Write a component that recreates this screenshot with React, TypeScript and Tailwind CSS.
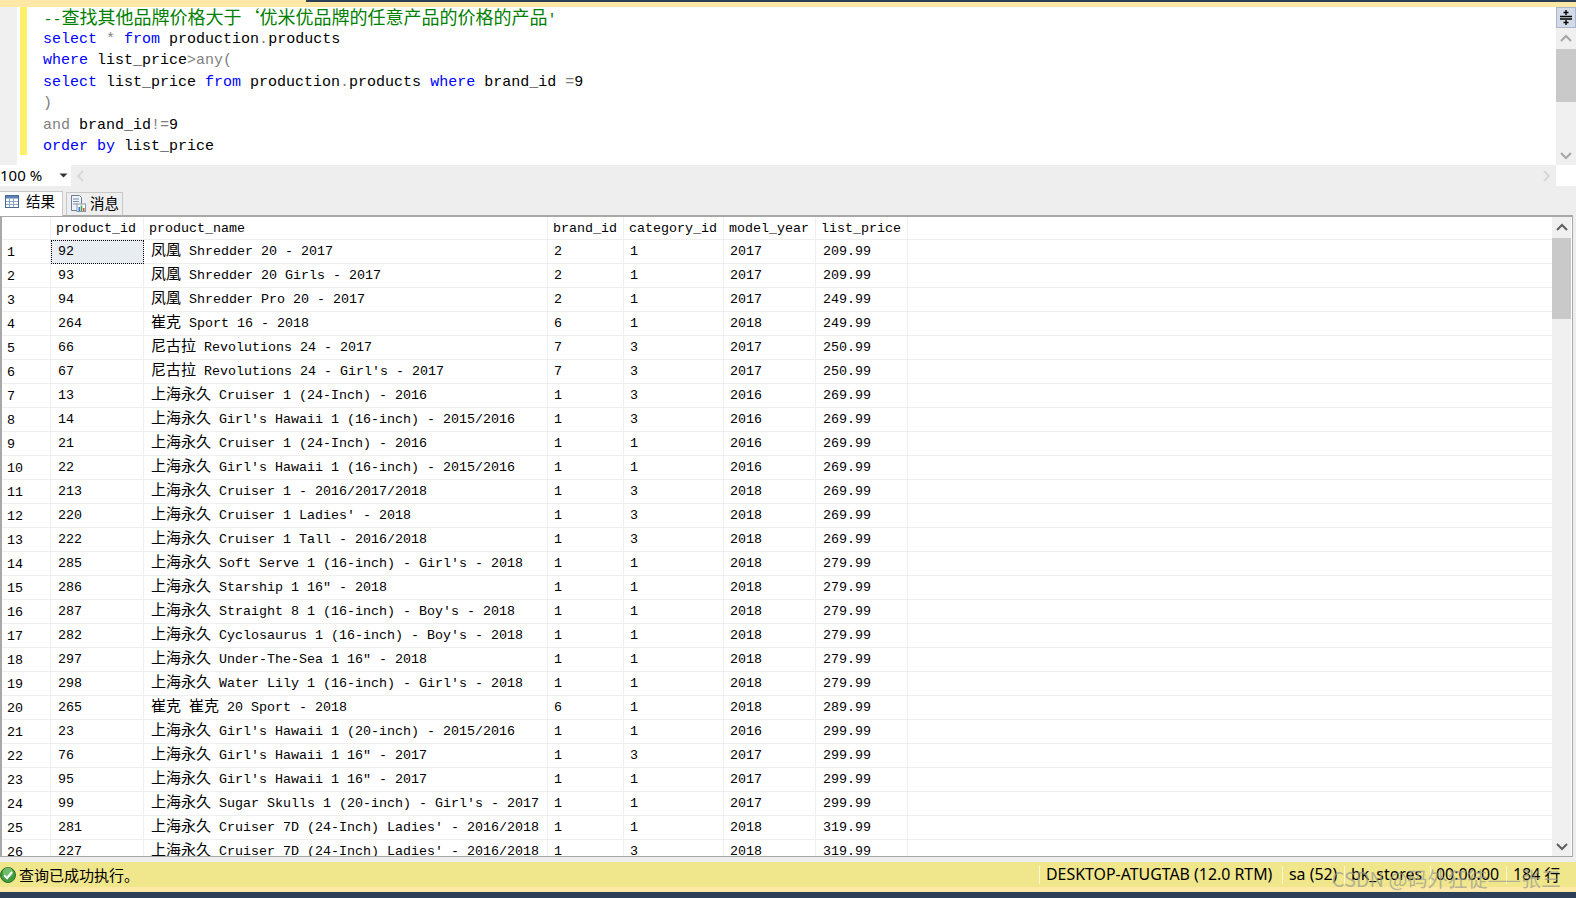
import React from "react";

const rows: [number, number, string, number, number, number, string][] = [
  [1, 92, "凤凰 Shredder 20 - 2017", 2, 1, 2017, "209.99"],
  [2, 93, "凤凰 Shredder 20 Girls - 2017", 2, 1, 2017, "209.99"],
  [3, 94, "凤凰 Shredder Pro 20 - 2017", 2, 1, 2017, "249.99"],
  [4, 264, "崔克 Sport 16 - 2018", 6, 1, 2018, "249.99"],
  [5, 66, "尼古拉 Revolutions 24 - 2017", 7, 3, 2017, "250.99"],
  [6, 67, "尼古拉 Revolutions 24 - Girl's - 2017", 7, 3, 2017, "250.99"],
  [7, 13, "上海永久 Cruiser 1 (24-Inch) - 2016", 1, 3, 2016, "269.99"],
  [8, 14, "上海永久 Girl's Hawaii 1 (16-inch) - 2015/2016", 1, 3, 2016, "269.99"],
  [9, 21, "上海永久 Cruiser 1 (24-Inch) - 2016", 1, 1, 2016, "269.99"],
  [10, 22, "上海永久 Girl's Hawaii 1 (16-inch) - 2015/2016", 1, 1, 2016, "269.99"],
  [11, 213, "上海永久 Cruiser 1 - 2016/2017/2018", 1, 3, 2018, "269.99"],
  [12, 220, "上海永久 Cruiser 1 Ladies' - 2018", 1, 3, 2018, "269.99"],
  [13, 222, "上海永久 Cruiser 1 Tall - 2016/2018", 1, 3, 2018, "269.99"],
  [14, 285, "上海永久 Soft Serve 1 (16-inch) - Girl's - 2018", 1, 1, 2018, "279.99"],
  [15, 286, "上海永久 Starship 1 16″ - 2018", 1, 1, 2018, "279.99"],
  [16, 287, "上海永久 Straight 8 1 (16-inch) - Boy's - 2018", 1, 1, 2018, "279.99"],
  [17, 282, "上海永久 Cyclosaurus 1 (16-inch) - Boy's - 2018", 1, 1, 2018, "279.99"],
  [18, 297, "上海永久 Under-The-Sea 1 16″ - 2018", 1, 1, 2018, "279.99"],
  [19, 298, "上海永久 Water Lily 1 (16-inch) - Girl's - 2018", 1, 1, 2018, "279.99"],
  [20, 265, "崔克 崔克 20 Sport - 2018", 6, 1, 2018, "289.99"],
  [21, 23, "上海永久 Girl's Hawaii 1 (20-inch) - 2015/2016", 1, 1, 2016, "299.99"],
  [22, 76, "上海永久 Girl's Hawaii 1 16″ - 2017", 1, 3, 2017, "299.99"],
  [23, 95, "上海永久 Girl's Hawaii 1 16″ - 2017", 1, 1, 2017, "299.99"],
  [24, 99, "上海永久 Sugar Skulls 1 (20-inch) - Girl's - 2017", 1, 1, 2017, "299.99"],
  [25, 281, "上海永久 Cruiser 7D (24-Inch) Ladies' - 2016/2018", 1, 1, 2018, "319.99"],
  [26, 227, "上海永久 Cruiser 7D (24-Inch) Ladies' - 2016/2018", 1, 3, 2018, "319.99"],
];

const COLS = "grid-cols-[49px_93px_404px_76px_100px_92px_92px]";

function Mixed({ text, big }: { text: string; big?: boolean }) {
  const parts = text.split(/([\u4e00-\u9fff‘]+)/);
  return (
    <>
      {parts.map((p, i) =>
        /[\u4e00-\u9fff‘]/.test(p) ? (
          <span
            key={i}
            className={
              big
                ? "font-['Noto_Sans_CJK_SC',sans-serif] text-[18px] leading-none"
                : "font-['Noto_Sans_CJK_SC',sans-serif] text-[15px] leading-none"
            }
          >
            {p}
          </span>
        ) : (
          <span key={i}>{p}</span>
        )
      )}
    </>
  );
}

function Line({ children }: { children: React.ReactNode }) {
  return <div className="h-[21.5px] leading-[21.5px] whitespace-pre">{children}</div>;
}

function Chevron({ dir, color }: { dir: "up" | "down" | "left" | "right"; color: string }) {
  const d = {
    up: "M2 9 L7 4 L12 9",
    down: "M2 5 L7 10 L12 5",
    left: "M9 2 L4 7 L9 12",
    right: "M5 2 L10 7 L5 12",
  }[dir];
  return (
    <svg width="14" height="14" viewBox="0 0 14 14">
      <path d={d} fill="none" stroke={color} strokeWidth="2" />
    </svg>
  );
}

function GridIcon() {
  return (
    <svg width="14" height="13" viewBox="0 0 14 13" className="shrink-0">
      <rect x="0.5" y="0.5" width="13" height="12" fill="#fff" stroke="#4a6a96" />
      <rect x="1" y="1" width="12" height="2.5" fill="#5b80b4" />
      <path d="M1 6.5H13M1 9.5H13M4.5 3.5V12M8.5 3.5V12" stroke="#8ea6c6" strokeWidth="1" />
    </svg>
  );
}

function MessageIcon() {
  return (
    <svg width="15" height="18" viewBox="0 0 15 18" className="shrink-0">
      <path d="M0.5 1.5H8.5L10.5 3.5V16.5H0.5Z" fill="#eef2f7" stroke="#6c7f99" />
      <path d="M2 5H8M2 7.5H8M2 10H6" stroke="#7b90ad" />
      <rect x="6" y="10" width="8.5" height="7.5" fill="#fff" stroke="#8a96a8" />
      <rect x="7.5" y="13" width="1.6" height="4" fill="#2f7fd6" />
      <rect x="9.7" y="11.5" width="1.6" height="5.5" fill="#3aa655" />
      <rect x="11.9" y="14" width="1.6" height="3" fill="#d8503c" />
    </svg>
  );
}

function CheckIcon() {
  return (
    <svg width="16" height="16" viewBox="0 0 16 16" className="shrink-0">
      <circle cx="8" cy="8" r="7.5" fill="#3f9d3c" stroke="#2c6f2c" />
      <circle cx="8" cy="5.5" r="5" fill="#8fd08a" opacity="0.6" />
      <path d="M4 8.3 L7 11.2 L12 5" fill="none" stroke="#fff" strokeWidth="2" />
    </svg>
  );
}

export default function App() {
  const mono = "font-['Liberation_Mono',monospace]";
  return (
    <div className={`relative w-[1576px] h-[898px] overflow-hidden bg-[#eeeeee] flex flex-col text-black ${mono}`}>
      {/* top strip */}
      <div className="h-[7px] shrink-0 bg-[#ffe8a6] flex items-start">
        <div className="w-[306px]" />
        <div className="flex-1 h-[2px] bg-[#2d3e57]" />
      </div>

      {/* editor */}
      <div className="h-[158px] shrink-0 flex bg-white">
        <div className="w-[17px] bg-[#f0f0f0] shrink-0" />
        <div className="w-[3px] shrink-0" />
        <div className="w-[7px] h-[148px] bg-[#fff06a] shrink-0" />
        <div className="flex-1 pl-[16px] text-[15px]">
          <Line>
            <span className="text-[#008000] ml-[0.5px]">
              <Mixed big text="--查找其他品牌价格大于‘优米优品牌的任意产品的价格的产品'" />
            </span>
          </Line>
          <div>
            <Line>
              <span className="text-[#0000ff]">select</span> <span className="text-[#808080]">*</span>{" "}
              <span className="text-[#0000ff]">from</span> production<span className="text-[#808080]">.</span>products
            </Line>
            <Line>
              <span className="text-[#0000ff]">where</span> list_price<span className="text-[#808080]">&gt;any(</span>
            </Line>
            <Line>
              <span className="text-[#0000ff]">select</span> list_price <span className="text-[#0000ff]">from</span>{" "}
              production<span className="text-[#808080]">.</span>products <span className="text-[#0000ff]">where</span>{" "}
              brand_id <span className="text-[#808080]">=</span>9
            </Line>
            <Line>
              <span className="text-[#808080]">)</span>
            </Line>
            <Line>
              <span className="text-[#808080]">and</span> brand_id<span className="text-[#808080]">!=</span>9
            </Line>
            <Line>
              <span className="text-[#0000ff]">order by</span> list_price
            </Line>
          </div>
        </div>
        <div className="w-[20px] shrink-0 flex flex-col bg-[#f0f0f0]">
          <div className="h-[21px] shrink-0 bg-[#d3dbe8] border border-[#a9b6cc] flex items-center justify-center">
            <svg width="14" height="17" viewBox="0 0 14 17">
              <path d="M1 7.5H13M1 10H13" stroke="#000" strokeWidth="1.4" />
              <path d="M7 1V6M7 11V16" stroke="#000" strokeWidth="1.4" />
              <path d="M4.5 3.5H9.5M4.5 13.5H9.5" stroke="#000" strokeWidth="1.4" />
            </svg>
          </div>
          <div className="h-[21px] shrink-0 flex items-center justify-center">
            <Chevron dir="up" color="#a6a6a6" />
          </div>
          <div className="h-[53px] shrink-0 bg-[#c9c9c9]" />
          <div className="flex-1" />
          <div className="h-[20px] shrink-0 flex items-center justify-center">
            <Chevron dir="down" color="#a6a6a6" />
          </div>
        </div>
      </div>

      {/* zoom and horizontal scrollbar */}
      <div className="h-[21px] shrink-0 flex bg-[#eeeeee]">
        <div className="w-[71px] shrink-0 bg-white flex items-center justify-between pr-[3px] font-['Noto_Sans',sans-serif] text-[15px]">
          <span className="text-black">100 %</span>
          <svg width="9" height="5" viewBox="0 0 9 5">
            <path d="M0.5 0.5H8.5L4.5 4.5Z" fill="#333" />
          </svg>
        </div>
        <div className="w-[20px] shrink-0 flex items-center justify-center">
          <Chevron dir="left" color="#d8d8d8" />
        </div>
        <div className="flex-1" />
        <div className="w-[20px] shrink-0 flex items-center justify-center">
          <Chevron dir="right" color="#d8d8d8" />
        </div>
        <div className="w-[20px] shrink-0 bg-white" />
      </div>

      {/* tabs */}
      <div className="h-[29px] shrink-0 flex items-end gap-[3px] font-['Noto_Sans_CJK_SC',sans-serif] text-[14.5px]">
        <div className="h-[25px] w-[63px] bg-white border-t border-r border-[#c8c8c8] flex items-center pl-[5px] gap-[7px] leading-none relative top-px pb-[5px]">
          <GridIcon />
          <span>结果</span>
        </div>
        <div className="h-[23px] w-[57px] bg-[#eeeeee] border-t border-r border-l border-[#c8c8c8] flex items-center pl-[4px] gap-[4px] leading-none pb-[2px]">
          <MessageIcon />
          <span>消息</span>
        </div>
      </div>

      {/* results grid */}
      <div className="h-[642px] shrink-0 mr-[3px] border border-[#a8a8a8] border-t-2 border-l-2 bg-white flex">
        <div className="w-[1550px] overflow-hidden text-[13.33px]">
          <div className={`grid ${COLS} h-[23px] leading-[24px] border-b border-[#efefef]`}>
            <div className="border-r border-[#efefef]" />
            {["product_id", "product_name", "brand_id", "category_id", "model_year", "list_price"].map((h) => (
              <div key={h} className="pl-[5px] border-r border-[#efefef]">
                {h}
              </div>
            ))}
          </div>
          {rows.map((r, i) => (
            <div key={r[0]} className={`grid ${COLS} h-[24px] leading-[23px] border-b border-[#efefef]`}>
              <div className="pl-[5px] border-r border-[#efefef] pt-px">{r[0]}</div>
              <div
                className={
                  i === 0
                    ? "pl-[6px] bg-[#e8edf1] border border-dotted border-black leading-[21px]"
                    : "pl-[7px] border-r border-[#efefef]"
                }
              >
                {r[1]}
              </div>
              <div className="pl-[7px] border-r border-[#efefef] whitespace-pre">
                <Mixed text={r[2]} />
              </div>
              <div className="pl-[6px] border-r border-[#efefef]">{r[3]}</div>
              <div className="pl-[6px] border-r border-[#efefef]">{r[4]}</div>
              <div className="pl-[6px] border-r border-[#efefef]">{r[5]}</div>
              <div className="pl-[7px] border-r border-[#efefef]">{r[6]}</div>
            </div>
          ))}
        </div>
        <div className="w-[19px] shrink-0 flex flex-col bg-[#f0f0f0]">
          <div className="h-[21px] shrink-0 flex items-center justify-center">
            <Chevron dir="up" color="#5f5f5f" />
          </div>
          <div className="h-[81px] shrink-0 bg-[#c9c9c9]" />
          <div className="flex-1" />
          <div className="h-[21px] shrink-0 flex items-center justify-center">
            <Chevron dir="down" color="#5f5f5f" />
          </div>
        </div>
      </div>

      <div className="h-[5px] shrink-0" />

      {/* status bar */}
      <div className="h-[25px] shrink-0 bg-[#f0e68c] flex items-center">
        <div className="flex-1 flex items-center gap-[3px] font-['Noto_Sans_CJK_SC',sans-serif] text-[15px] leading-none">
          <CheckIcon />
          <span>查询已成功执行。</span>
        </div>
        <div className="flex items-center h-full font-['Noto_Sans',sans-serif] text-[15.9px] leading-none">
          <div className="w-[243px] h-[18px] border-l border-[#fff8d0] pl-[6px] flex items-center whitespace-pre">
            DESKTOP-ATUGTAB (12.0 RTM)
          </div>
          <div className="w-[62px] h-[18px] border-l border-[#fff8d0] pl-[6px] flex items-center whitespace-pre">
            sa (52)
          </div>
          <div className="w-[86px] h-[18px] border-l border-[#fff8d0] pl-[6px] flex items-center whitespace-pre">
            bk_stores
          </div>
          <div className="w-[76px] h-[18px] border-l border-[#fff8d0] pl-[5px] flex items-center whitespace-pre">
            00:00:00
          </div>
          <div className="w-[70px] h-[18px] border-l border-[#fff8d0] pl-[6px] flex items-center whitespace-pre">
            <span>184 </span>
            <span className="font-['Noto_Sans_CJK_SC',sans-serif]">行</span>
          </div>
        </div>
      </div>
      <div className="h-[5px] shrink-0 bg-[#ffe8a6]" />
      <div className="flex-1 bg-[#2d3e57]" />

      {/* watermark */}
      <div className="absolute right-[15px] bottom-[9px] font-['Noto_Sans_CJK_SC',sans-serif] text-[20px] leading-none text-[#9a9a92]/70 whitespace-pre">
        CSDN @码外狂徒——张三
      </div>
    </div>
  );
}
